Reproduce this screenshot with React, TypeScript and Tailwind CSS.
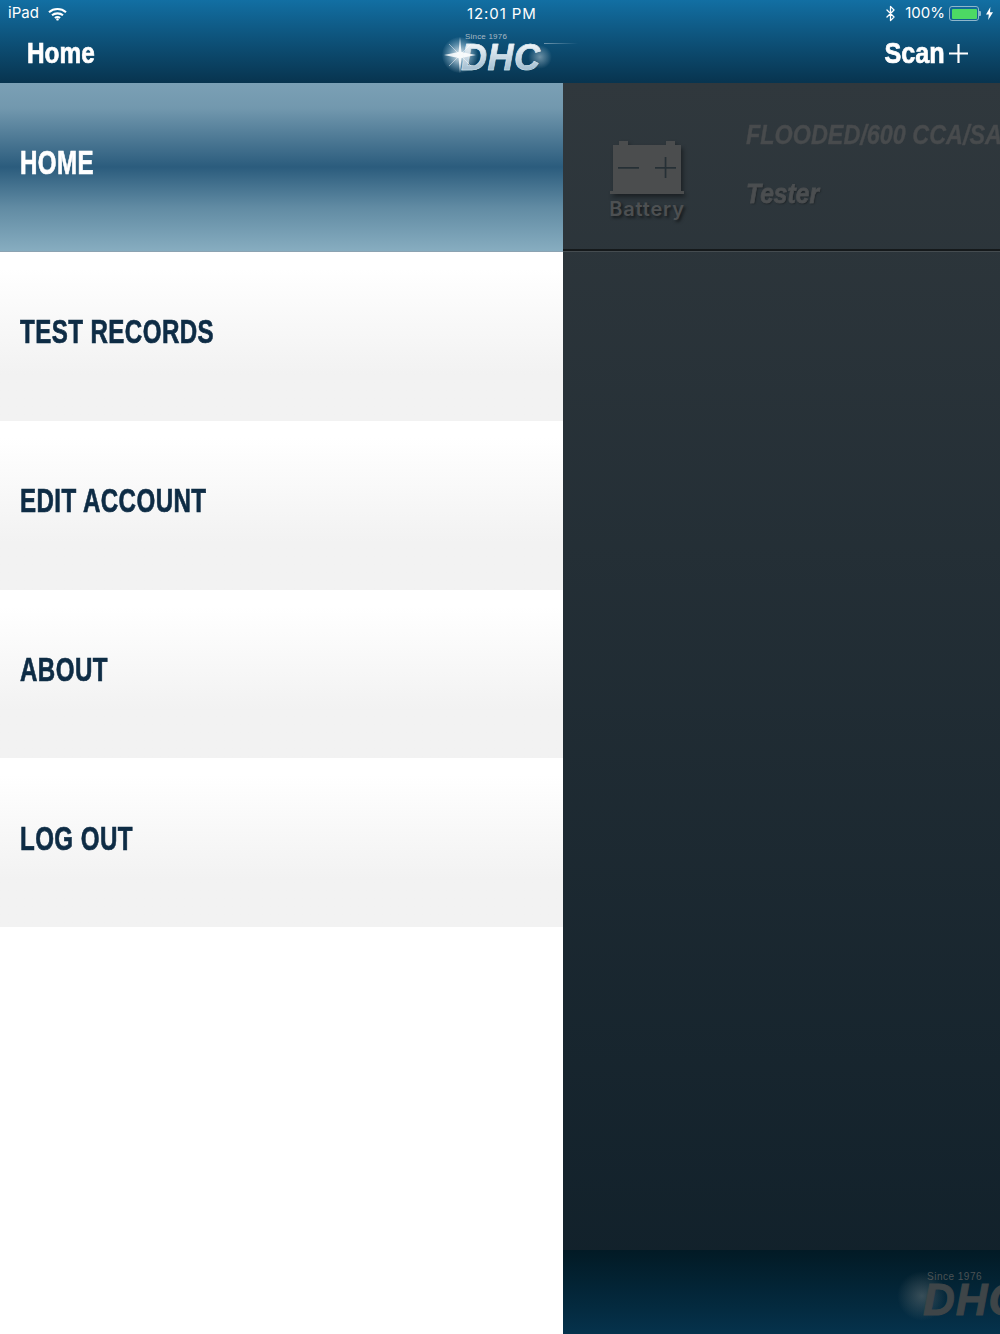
import { Bluetooth } from "lucide-react";

const heavy = "font-['Liberation_Sans',sans-serif] font-bold";
const menuLabel = `${heavy} origin-left scale-x-[0.72] whitespace-nowrap text-[33.5px] leading-[40px] tracking-[0.6px] [-webkit-text-stroke:0.7px_currentColor]`;

const menu = ["TEST RECORDS", "EDIT ACCOUNT", "ABOUT", "LOG OUT"];

function Wifi() {
  return (
    <svg width="19" height="14" viewBox="0 0 19 14" fill="none" stroke="#fff" strokeWidth="2.1">
      <path d="M1 5.2C5.8 .9 13.2 .9 18 5.2" />
      <path d="M4 8.3c3-2.6 8-2.6 11 0" />
      <path d="M6.9 11c1.5-1.2 3.7-1.2 5.2 0" />
      <circle cx="9.5" cy="12.4" r="1.2" fill="#fff" stroke="none" />
    </svg>
  );
}

function BatteryIcon() {
  return (
    <svg width="76" height="56" viewBox="0 0 76 56" className="drop-shadow-[2px_3px_2px_rgba(0,0,0,0.4)]">
      <path d="M4 5h6V1h9v4h38V1h9v4h6v46H4z" fill="#4b4d4e" />
      <rect x="1" y="51" width="74" height="3" fill="#4b4d4e" />
      <rect x="9" y="27" width="21" height="1.7" fill="#263036" />
      <rect x="46" y="27" width="21" height="1.7" fill="#263036" />
      <rect x="55.7" y="17" width="1.7" height="21" fill="#263036" />
    </svg>
  );
}

function Sparkle() {
  return (
    <svg width="40" height="40" viewBox="0 0 40 40" className="absolute left-[-6px] top-[6px]">
      <path d="M20 2l1.4 15L36 20l-14.6 3L20 38l-1.4-15L4 20l14.6-3z" fill="#fff" opacity="0.85" />
      <path d="M9 9l9.5 9.5M31 9l-9.5 9.5M9 31l9.5-9.5M31 31l-9.5-9.5" stroke="#fff" strokeWidth="0.8" opacity="0.6" />
    </svg>
  );
}

function Logo({ muted }: { muted?: boolean }) {
  if (muted) {
    return (
      <div className="relative h-[60px] w-[110px]">
        <div className="absolute left-[-24px] top-[0px] h-[50px] w-[50px] rounded-full bg-[radial-gradient(circle,rgba(120,125,125,0.45),rgba(120,125,125,0)_70%)]" />
        <span className="absolute left-[6px] top-0 whitespace-nowrap font-['Liberation_Sans',sans-serif] text-[10px] leading-[12px] tracking-[0.5px] text-[#4b5254]">
          Since 1976
        </span>
        <span className="absolute left-[2px] top-[4px] font-['Liberation_Sans',sans-serif] text-[44px] font-bold italic leading-[50px] tracking-[1px] text-[#3e4548] [-webkit-text-stroke:1px_#3e4548]">
          DHC
        </span>
      </div>
    );
  }
  return (
    <div className="relative h-[48px] w-[110px]">
      <div className="absolute left-[-4px] top-[8px] h-[36px] w-[36px] rounded-full bg-[radial-gradient(circle,rgba(235,245,250,0.85)_10%,rgba(190,218,235,0.45)_42%,rgba(190,218,235,0)_72%)]" />
      <div className="absolute left-[82px] top-[16px] h-[24px] w-[24px] rounded-full bg-[radial-gradient(circle,rgba(255,255,255,0.4),rgba(255,255,255,0)_70%)]" />
      <div className="absolute left-[98px] top-[14px] h-[1px] w-[34px] bg-gradient-to-r from-white/40 to-white/0" />
      <span className="absolute left-[19px] top-[2px] whitespace-nowrap font-['Liberation_Sans',sans-serif] text-[8px] leading-[12px] tracking-[0.2px] text-[#a9bac5]">
        Since 1976
      </span>
      <span className="absolute left-[15px] top-[10px] bg-gradient-to-b from-[#ffffff] to-[#8fb0c6] bg-clip-text font-['Liberation_Sans',sans-serif] text-[36px] font-bold italic leading-[38px] tracking-[0.5px] text-transparent [-webkit-text-stroke:0.5px_#dbe9f1]">
        DHC
      </span>
      <Sparkle />
    </div>
  );
}

export default function App() {
  return (
    <div className="flex h-[1334px] w-[1000px] flex-col overflow-hidden bg-white">
      <header className="relative h-[83px] shrink-0 bg-gradient-to-b from-[#126fa3] to-[#08344f] text-white">
        <div className="flex h-[27px] items-center justify-between pl-[8px] pr-[7px] font-['Inter','Liberation_Sans',sans-serif] text-[15px]">
          <div className="flex items-center gap-[9px]">
            <span>iPad</span>
            <Wifi />
          </div>
          <div className="flex items-center">
            <Bluetooth size={17} strokeWidth={1.8} />
            <span className="ml-[6px]">100%</span>
            <div className="ml-[4px] flex h-[15px] w-[30px] items-center rounded-[3px] border border-[#8fb6cb] p-[1.5px]">
              <div className="h-full w-full rounded-[1px] bg-[#4cd964]" />
            </div>
            <div className="h-[5px] w-[2px] rounded-r-[1px] bg-[#8fb6cb]" />
            <svg width="7" height="13" viewBox="0 0 7 13" fill="#fff" className="ml-[5px]">
              <path d="M4.4 0 0 7.4h2.8L2.2 13 7 5.2H4z" />
            </svg>
          </div>
        </div>
        <span className="absolute left-[467px] top-[3px] font-['Inter','Liberation_Sans',sans-serif] text-[15px] tracking-[0.9px]">12:01 PM</span>
        <div className="flex h-[56px] items-start justify-between pl-[27px] pr-[32px] pt-[8px]">
          <span className={`${heavy} origin-left scale-x-[0.84] text-[29px] leading-[36px] [-webkit-text-stroke:0.7px_#fff]`}>Home</span>
          <div className="flex items-center gap-[4px]">
            <span className={`${heavy} origin-right scale-x-[0.84] text-[30px] leading-[36px] [-webkit-text-stroke:0.7px_#fff]`}>Scan</span>
            <svg width="19" height="19" viewBox="0 0 19 19" stroke="#fff" strokeWidth="2.2">
              <path d="M0 9.5h19M9.5 0v19" />
            </svg>
          </div>
        </div>
        <div className="absolute left-[446px] top-[29px]">
          <Logo />
        </div>
      </header>

      <div className="flex min-h-0 flex-1">
        <nav className="w-[563px] shrink-0 bg-white">
          <div className="flex h-[169px] items-center border-b border-[#8ca3b2] bg-[linear-gradient(to_bottom,#7ba0b5_0%,#7298ae_15%,#2b5c7d_50%,#618ba3_74%,#87adc0_100%)] pb-[8px] pl-[20px]">
            <span className={`${menuLabel} text-white`}>HOME</span>
          </div>
          {menu.map((label) => (
            <div
              key={label}
              className="flex h-[168.75px] items-center bg-gradient-to-b from-[#ffffff] from-[10%] to-[#f2f2f2] to-[72%] pb-[8px] pl-[20px]"
            >
              <span className={`${menuLabel} text-[#0e2c45]`}>{label}</span>
            </div>
          ))}
        </nav>

        <main className="flex min-w-0 flex-1 flex-col bg-gradient-to-b from-[#30383d] to-[#10202a]">
          <div className="flex h-[168px] shrink-0 border-b-2 border-[#15191b] shadow-[0_1px_0_#454c50]">
            <div className="flex w-[168px] shrink-0 flex-col items-center pt-[57px]">
              <BatteryIcon />
              <span className="mt-[1px] font-['Inter','Liberation_Sans',sans-serif] text-[20px] font-semibold leading-[24px] tracking-[0.8px] text-[#4d5052] [text-shadow:2px_2px_3px_rgba(0,0,0,0.5)]">
                Battery
              </span>
            </div>
            <div className="ml-[15px] min-w-0">
              <p className={`${heavy} mt-[33px] origin-left scale-x-[0.835] whitespace-nowrap text-[28px] italic leading-[38px] text-[#484b4d] [-webkit-text-stroke:0.4px_#484b4d]`}>
                FLOODED/600 CCA/SAE
              </p>
              <p className={`${heavy} mt-[21px] origin-left scale-x-[0.88] text-[28px] italic leading-[38px] text-[#4b4e50] [-webkit-text-stroke:0.8px_#4b4e50] [text-shadow:1px_1px_2px_rgba(0,0,0,0.4)]`}>
                Tester
              </p>
            </div>
          </div>
          <div className="flex-1" />
          <footer className="h-[84px] shrink-0 overflow-hidden bg-gradient-to-b from-[#021a25] to-[#05324c] pl-[358px] pt-[21px]">
            <Logo muted />
          </footer>
        </main>
      </div>
    </div>
  );
}
